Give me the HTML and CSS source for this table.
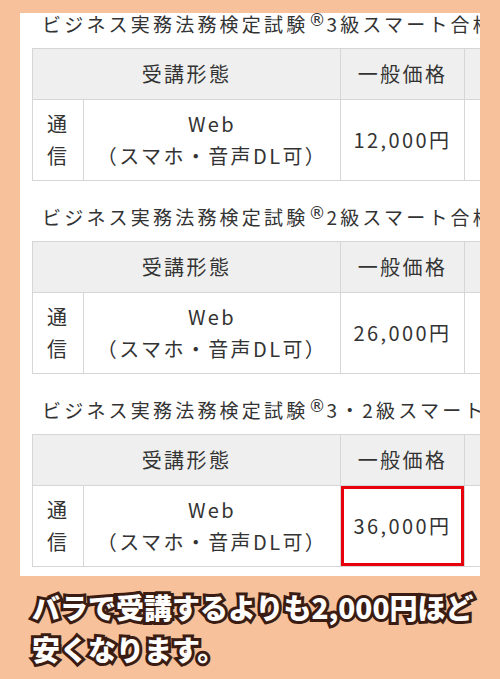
FILE: index.html
```html
<!DOCTYPE html>
<html lang="ja">
<head>
<meta charset="utf-8">
<link rel="stylesheet" href="styles.css">
</head>
<body>
<div class="panel">
  <section class="course">
    <h2 class="course-title">ビジネス実務法務検定試験<sup>®</sup>3級スマート合格講座</h2>
    <table class="price-table">
      <colgroup><col class="c1"><col class="c2"><col class="c3"><col class="c4"></colgroup>
      <tr><th colspan="2">受講形態</th><th>一般価格</th><th></th></tr>
      <tr><td class="type">通信</td><td>Web<br>（スマホ・音声DL可）</td><td>12,000円</td><td></td></tr>
    </table>
  </section>
  <section class="course">
    <h2 class="course-title">ビジネス実務法務検定試験<sup>®</sup>2級スマート合格講座</h2>
    <table class="price-table">
      <colgroup><col class="c1"><col class="c2"><col class="c3"><col class="c4"></colgroup>
      <tr><th colspan="2">受講形態</th><th>一般価格</th><th></th></tr>
      <tr><td class="type">通信</td><td>Web<br>（スマホ・音声DL可）</td><td>26,000円</td><td></td></tr>
    </table>
  </section>
  <section class="course">
    <h2 class="course-title">ビジネス実務法務検定試験<sup>®</sup>3・2級スマート合格講座</h2>
    <table class="price-table">
      <colgroup><col class="c1"><col class="c2"><col class="c3"><col class="c4"></colgroup>
      <tr><th colspan="2">受講形態</th><th>一般価格</th><th></th></tr>
      <tr><td class="type">通信</td><td>Web<br>（スマホ・音声DL可）</td><td class="highlight">36,000円</td><td></td></tr>
    </table>
  </section>
</div>
<p class="caption">バラで受講するよりも2,000円ほど<br>安くなります。</p>
</body>
</html>
```
FILE: styles.css
```css
html, body {
  margin: 0;
  padding: 0;
}
body {
  background: #f6c19b;
  font-family: "Noto Sans CJK JP", "Noto Sans", sans-serif;
  color: #333;
  width: 500px;
  height: 679px;
  overflow: hidden;
}
.panel {
  margin: 13px 0 0 20px;
  width: 460px;
  background: #fff;
  overflow: hidden;
  padding: 0 0 9px 12px;
  box-sizing: border-box;
}
.course-title {
  margin: 0 0 13px;
  padding-left: 10px;
  font-size: 19px;
  font-weight: 400;
  line-height: 22px;
  letter-spacing: 3.2px;
  white-space: nowrap;
  color: #333;
}
.course-title sup {
  font-family: "DejaVu Sans", sans-serif;
  font-size: 17px;
  line-height: 0;
  vertical-align: 6px;
  letter-spacing: 0;
  margin-right: 1px;
}
.price-table {
  border-collapse: collapse;
  table-layout: fixed;
  width: 552px;
  margin-bottom: 25px;
  font-size: 20px;
  letter-spacing: 2.4px;
}
.course:last-child .price-table {
  margin-bottom: 0;
}
.c1 { width: 51px; }
.c2 { width: 257px; }
.c3 { width: 124px; }
.c4 { width: 120px; }
.price-table th,
.price-table td {
  border: 1px solid #d6d6d6;
  padding: 0;
  text-align: center;
  vertical-align: middle;
  font-weight: 400;
  line-height: 32px;
  white-space: nowrap;
}
.price-table th {
  background: #efefef;
  height: 50px;
}
.price-table td {
  height: 80px;
}
.price-table td.type {
  white-space: normal;
  padding: 0 14px;
  line-height: 32px;
}
.price-table td.highlight {
  position: relative;
}
.price-table td.highlight::after {
  content: "";
  position: absolute;
  left: 0;
  top: 0;
  right: 0;
  bottom: 0;
  border: 3px solid #e8000c;
}
.caption {
  margin: 10px 0 0 32px;
  font-size: 28px;
  line-height: 42px;
  font-weight: 900;
  color: #fff;
  white-space: nowrap;
  -webkit-text-stroke: 6px #3a1c12;
  paint-order: stroke fill;
}
```
